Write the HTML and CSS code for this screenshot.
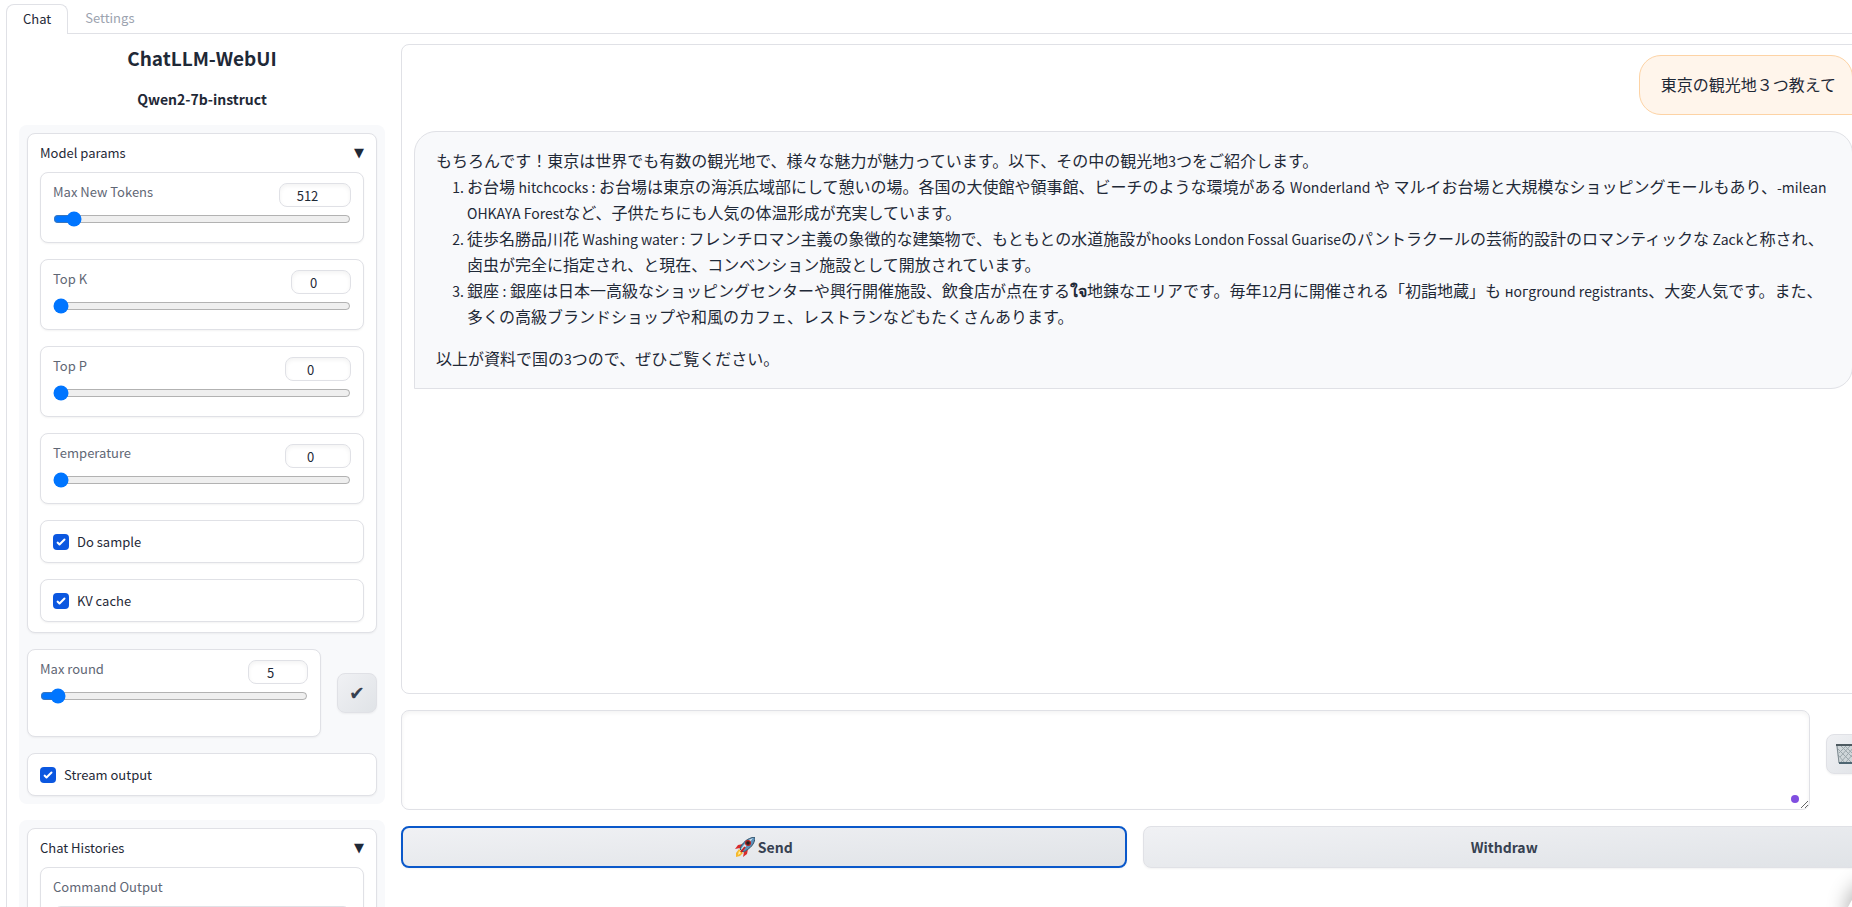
FILE: index.html
```html
<!DOCTYPE html>
<html lang="ja">
<head>
<meta charset="utf-8">
<title>ChatLLM-WebUI</title>
<link rel="stylesheet" href="styles.css">
</head>
<body>
<main class="app">
  <nav class="tabs">
    <button class="tab tab-active" type="button">Chat</button>
    <button class="tab" type="button">Settings</button>
    <span class="tabs-rule"></span>
  </nav>
  <div class="page">
    <aside class="sidebar">
      <h1 class="title">ChatLLM-WebUI</h1>
      <h2 class="model">Qwen2-7b-instruct</h2>
      <section class="group">
        <section class="card">
          <button class="card-head" type="button">Model params<span class="arrow">▼</span></button>
          <div class="stack">
            <div class="block">
              <div class="field-head"><label for="tokens">Max New Tokens</label><input class="num num-wide" type="number" value="512" aria-label="Max New Tokens value"></div>
              <input class="slider" id="tokens" type="range" min="1" max="8192" value="380">
            </div>
            <div class="block">
              <div class="field-head"><label for="topk">Top K</label><input class="num num-narrow" type="number" value="0" aria-label="Top K value"></div>
              <input class="slider" id="topk" type="range" min="0" max="100" value="0">
            </div>
            <div class="block">
              <div class="field-head"><label for="topp">Top P</label><input class="num" type="number" value="0" aria-label="Top P value"></div>
              <input class="slider" id="topp" type="range" min="0" max="1" step="0.01" value="0">
            </div>
            <div class="block">
              <div class="field-head"><label for="temp">Temperature</label><input class="num" type="number" value="0" aria-label="Temperature value"></div>
              <input class="slider" id="temp" type="range" min="0" max="1" step="0.01" value="0">
            </div>
            <label class="block check"><input class="box" type="checkbox" checked>Do sample</label>
            <label class="block check"><input class="box" type="checkbox" checked>KV cache</label>
          </div>
        </section>
        <div class="round-row">
          <div class="block round">
            <div class="field-head"><label for="round">Max round</label><input class="num num-narrow" type="number" value="5" aria-label="Max round value"></div>
            <input class="slider" id="round" type="range" min="1" max="100" value="5">
          </div>
          <button class="btn icon-btn" type="button" aria-label="Apply">✔</button>
        </div>
        <label class="block check"><input class="box" type="checkbox" checked>Stream output</label>
      </section>
      <section class="group">
        <section class="card">
          <button class="card-head" type="button">Chat Histories<span class="arrow">▼</span></button>
          <div class="block history">
            <label for="output">Command Output</label>
            <textarea class="output" id="output"></textarea>
          </div>
        </section>
      </section>
    </aside>
    <section class="main">
      <div class="chat">
        <div class="bubble user">東京の観光地３つ教えて</div>
        <div class="bubble bot">
          <p>もちろんです！東京は世界でも有数の観光地で、様々な魅力が魅力っています。以下、その中の観光地<span class="en">3</span>つをご紹介します。</p>
          <ol>
            <li>お台場 <span class="en">hitchcocks :</span> お台場は東京の海浜広域部にして憩いの場。各国の大使館や領事館、ビーチのような環境がある <span class="en">Wonderland</span> や マルイお台場と大規模なショッピングモールもあり、<span class="en">-milean</span><br><span class="en">OHKAYA Forest</span>など、子供たちにも人気の体温形成が充実しています。</li>
            <li>徒歩名勝品川花 <span class="en">Washing water :</span> フレンチロマン主義の象徴的な建築物で、もともとの水道施設が<span class="en">hooks London Fossal Guarise</span>のパントラクールの芸術的設計のロマンティックな <span class="en">Zack</span>と称され、<br>卤虫が完全に指定され、と現在、コンベンション施設として開放されています。</li>
            <li>銀座 <span class="en">:</span> 銀座は日本一高級なショッピングセンターや興行開催施設、飲食店が点在する<span class="thai">ใจ</span>地錬なエリアです。毎年<span class="en">12</span>月に開催される「初詣地蔵」も <span class="en">ногground registrants</span>、大変人気です。また、<br>多くの高級ブランドショップや和風のカフェ、レストランなどもたくさんあります。</li>
          </ol>
          <p>以上が資料で国の<span class="en">3</span>つので、ぜひご覧ください。</p>
        </div>
      </div>
      <div class="prompt-row">
        <div class="prompt-wrap">
          <textarea class="prompt" aria-label="Message"></textarea>
          <span class="dot"></span>
        </div>
        <button class="btn icon-btn clear" type="button" aria-label="Clear">
          <svg class="emoji" viewBox="0 0 20 20"><path d="M0 1h20l-3 19H3z" fill="#cfd6d9"/><path d="M2 5l13 13M5 2l12 12M9 2l9 9M2 11l7 8M18 3L5 18M14 2L4 13M10 2L3 9M18 9l-8 9" stroke="#9ca7ac" stroke-width="1"/><path d="M1 2l2 17M19 2l-2 17" stroke="#7d898f"/><path d="M0 1h20" stroke="#4e5a61" stroke-width="2"/><path d="M3 19h14" stroke="#4e6672" stroke-width="2"/></svg>
        </button>
      </div>
      <div class="actions">
        <button class="btn send" type="button">
          <svg class="emoji" viewBox="0 0 20 20"><path d="M8 7L3 8 0 12l5-1zM13 12l-1 5-4 3 1-5z" fill="#d92b2b"/><path d="M4 12l4 4-3 3-4 1 0-4z" fill="#f5b82e"/><path d="M4 14l2 2-3 2z" fill="#fff2a0"/><path d="M5 12C7 6 12 1 20 0c0 7-5 12-12 15z" fill="#5d93bd" stroke="#34536b"/><path d="M6 12C9 7 13 3 18 1c-3 4-6 8-11 12z" fill="#d9e7ef"/><circle cx="13" cy="6" r="3" fill="#b52020"/><circle cx="13" cy="6" r="1.8" fill="#222"/><path d="M10 10l-4 5" stroke="#c22" stroke-width="2"/></svg>
          Send</button>
        <button class="btn" type="button">Withdraw</button>
      </div>
    </section>
  </div>
  <span class="float"></span>
</main>
</body>
</html>
```
FILE: styles.css
```css
* { box-sizing: border-box; }
body {
  margin: 0;
  overflow: hidden;
  background: #fff;
  color: #1f2937;
  font-family: "Noto Sans CJK JP", "Noto Sans", sans-serif;
  font-size: 13px;
  line-height: 18px;
}
button, input, textarea { font: inherit; color: inherit; }
h1, h2, p, ol { margin: 0; }
.app { width: calc(100% + 26px); height: 100vh; overflow: hidden; padding: 4px 0 0 6px; }
.tabs { display: flex; height: 30px; }
.tab { padding: 0 17px 2px; border: 0; border-bottom: 1px solid #e0e1e6; background: none; color: #9ca3af; }
.tab-active { padding: 0 16px 2px; border: 1px solid #e0e1e6; border-bottom: 0; border-radius: 8px 8px 0 0; color: #1f2937; }
.tabs-rule { flex: 1; border-bottom: 1px solid #e0e1e6; }
.page { display: flex; gap: 16px; padding: 10px 12px 0; border-left: 1px solid #e0e1e6; }
.sidebar { flex: 0 0 366px; display: flex; flex-direction: column; }
.title { height: 30px; font-size: 19px; line-height: 28px; text-align: center; }
.model { margin: 15px 0 16px; font-size: 14px; line-height: 20px; text-align: center; }
.group { display: flex; flex-direction: column; gap: 16px; margin-bottom: 16px; padding: 8px; border-radius: 8px; background: #f8f9fb; }
.card, .block { border: 1px solid #e0e1e6; border-radius: 8px; background: #fff; box-shadow: 0 1px 2px rgba(0, 0, 0, .05); }
.card { padding: 10px 12px; }
.card-head { display: flex; justify-content: space-between; width: 100%; height: 18px; margin-bottom: 10px; padding: 0; border: 0; background: none; }
.arrow { font-family: "DejaVu Sans", sans-serif; font-size: 13px; }
.stack { display: flex; flex-direction: column; gap: 16px; }
.block { padding: 10px 12px; }
.field-head { display: flex; justify-content: space-between; height: 26px; color: #5f6775; }
.num { width: 66px; height: 24px; padding: 0 8px; border: 1px solid #e0e1e6; border-radius: 8px; background: #fff; color: #1f2937; text-align: center; box-shadow: inset 0 2px 4px rgba(0, 0, 0, .05); }
.num-wide { width: 72px; }
.num-narrow { width: 60px; }
.slider { display: block; width: 100%; height: 16px; margin: 2px 0 5px; accent-color: #0075ff; }
.check { display: flex; align-items: center; gap: 8px; min-height: 43px; }
.box {
  appearance: none;
  width: 16px;
  height: 16px;
  margin: 0;
  border-radius: 4px;
  background: #0b57e0 url("data:image/svg+xml,%3Csvg xmlns='http://www.w3.org/2000/svg' viewBox='0 0 16 16' fill='white'%3E%3Cpath d='M12.2 4.8a1 1 0 010 1.4l-5 5a1 1 0 01-1.4 0l-2-2a1 1 0 011.4-1.4l1.3 1.3 4.3-4.3a1 1 0 011.4 0z'/%3E%3C/svg%3E") center / 16px no-repeat;
}
.round-row { display: flex; gap: 16px; align-items: center; }
.round { flex: 1; height: 88px; }
.btn { flex: 1; display: flex; align-items: center; justify-content: center; gap: 3px; height: 42px; border: 1px solid #e0e1e6; border-radius: 8px; background: linear-gradient(to bottom right, #f0f1f4, #e0e3e7); color: #374151; font-size: 14px; font-weight: 700; box-shadow: 0 1px 2px rgba(0, 0, 0, .05); }
.icon-btn { flex: 0 0 40px; height: 40px; padding: 0; font-family: "DejaVu Sans", sans-serif; font-size: 19px; }
.clear { margin-bottom: 12px; }
.history { height: 160px; color: #5f6775; }
.output { display: block; width: 100%; height: 100px; margin-top: 10px; border: 1px solid #e0e1e6; border-radius: 8px; }
.main { flex: 1; min-width: 0; display: flex; flex-direction: column; gap: 16px; }
.chat { display: flex; flex-direction: column; gap: 16px; height: 650px; padding: 10px 12px; border: 1px solid #e0e1e6; border-radius: 8px; }
.bubble { padding: 15px 16px 17px 21px; border: 1px solid #e0e1e6; border-radius: 22px; font-size: 16px; line-height: 26px; }
.user { align-self: flex-end; border-color: #fdd3a5; border-bottom-right-radius: 0; background: #fff5eb; }
.bot { border-bottom-left-radius: 0; background: #f8f9fb; white-space: nowrap; }
.bot ol { margin-bottom: 16px; padding-left: 31px; }
.bot li::marker { font-size: 14px; }
.en { font-size: 14px; line-height: 20px; }
.thai { font-weight: 700; font-size: 16px; line-height: 20px; }
.prompt-row { display: flex; align-items: center; gap: 16px; }
.prompt-wrap { flex: 1; position: relative; }
.prompt { display: block; width: 100%; height: 100px; border: 1px solid #e0e1e6; border-radius: 8px; box-shadow: inset 0 2px 4px rgba(0, 0, 0, .05); }
.dot { position: absolute; right: 11px; bottom: 7px; width: 8px; height: 8px; border-radius: 50%; background: #804ee0; }
.actions { display: flex; gap: 16px; }
.send { border: 2px solid #0a58ca; }
.emoji { width: 20px; height: 20px; }
.float { position: absolute; left: calc(100% - 6px); top: 888px; width: 60px; height: 60px; border-radius: 50%; background: #fff; box-shadow: 0 -8px 20px rgba(0, 0, 0, .3); }
```
